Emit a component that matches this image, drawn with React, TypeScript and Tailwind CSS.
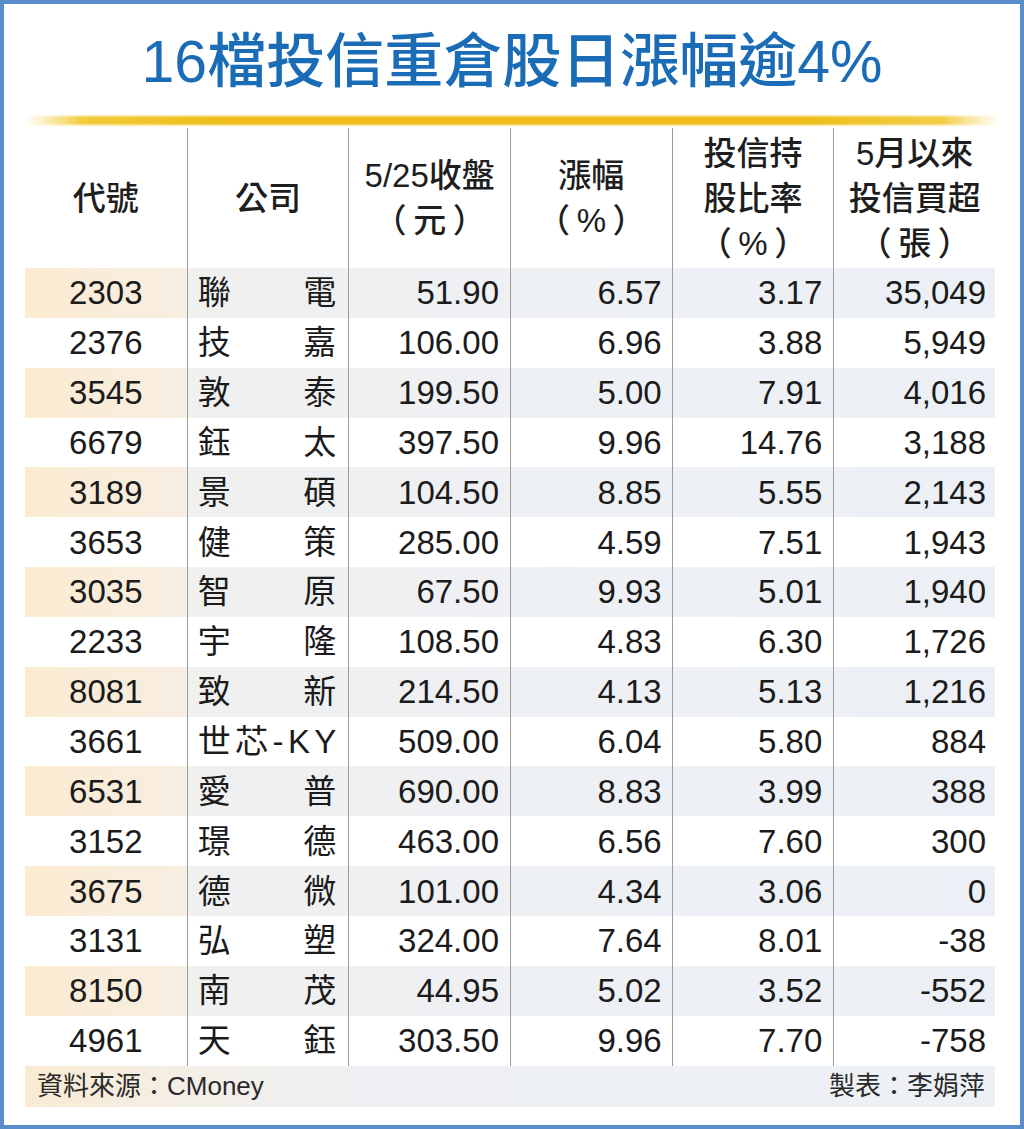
import React from "react";

type Row = [string, string[], string, string, string, string];

const rows: Row[] = [
  ["2303", ["聯", "電"], "51.90", "6.57", "3.17", "35,049"],
  ["2376", ["技", "嘉"], "106.00", "6.96", "3.88", "5,949"],
  ["3545", ["敦", "泰"], "199.50", "5.00", "7.91", "4,016"],
  ["6679", ["鈺", "太"], "397.50", "9.96", "14.76", "3,188"],
  ["3189", ["景", "碩"], "104.50", "8.85", "5.55", "2,143"],
  ["3653", ["健", "策"], "285.00", "4.59", "7.51", "1,943"],
  ["3035", ["智", "原"], "67.50", "9.93", "5.01", "1,940"],
  ["2233", ["宇", "隆"], "108.50", "4.83", "6.30", "1,726"],
  ["8081", ["致", "新"], "214.50", "4.13", "5.13", "1,216"],
  ["3661", ["世", "芯", "-", "K", "Y"], "509.00", "6.04", "5.80", "884"],
  ["6531", ["愛", "普"], "690.00", "8.83", "3.99", "388"],
  ["3152", ["璟", "德"], "463.00", "6.56", "7.60", "300"],
  ["3675", ["德", "微"], "101.00", "4.34", "3.06", "0"],
  ["3131", ["弘", "塑"], "324.00", "7.64", "8.01", "-38"],
  ["8150", ["南", "茂"], "44.95", "5.02", "3.52", "-552"],
  ["4961", ["天", "鈺"], "303.50", "9.96", "7.70", "-758"],
];

const headers: string[][] = [
  ["代號"],
  ["公司"],
  ["5/25收盤", "（\u2009元\u2009）"],
  ["漲幅", "（\u2009%\u2009）"],
  ["投信持", "股比率", "（\u2009%\u2009）"],
  ["5月以來", "投信買超", "（\u2009張\u2009）"],
];

export default function App() {
  return (
    <div className="w-[1024px] h-[1129px] bg-white border-4 border-[#5a8cc7] flex flex-col font-['Liberation_Sans','Noto_Sans_CJK_TC',sans-serif] text-[#1b1b1b]">
      <h1 className="mt-[29px] h-[59px] text-center text-[59px] leading-[59px] font-medium text-[#1a6cb6]">
        16檔投信重倉股日漲幅逾4%
      </h1>
      <div className="mt-[24px] ml-[21px] w-[975px] h-[9px] rounded-full blur-[0.8px] bg-[linear-gradient(90deg,rgba(245,205,60,0)_0%,#f3cb3a_6%,#eebd16_20%,#eebd16_80%,#f3cd45_94%,rgba(245,205,60,0)_100%)]" />
      <div className="mt-[3px] ml-[21px] w-[970px] flex flex-col">
        <div className="grid grid-cols-6 h-[140px]">
          {headers.map((h, i) => (
            <div
              key={i}
              className={`flex flex-col items-center justify-center text-[33px] leading-[45px] font-medium text-[#1e1e1e] ${
                i > 0 ? "border-l-[1.5px] border-[#9c9c9c]" : ""
              }`}
            >
              {h.map((line, j) => (
                <span key={j} className="whitespace-pre">{line}</span>
              ))}
            </div>
          ))}
        </div>
        {rows.map((r, idx) => {
          const striped = idx % 2 === 0;
          return (
            <div
              key={r[0]}
              className={`grid grid-cols-6 h-[49.85px] text-[33px] leading-none ${
                striped
                  ? "bg-[linear-gradient(90deg,#fbebd1_0%,#f7eee2_16.6%,#f0f0ef_16.6%,#eef0f3_45%,#ecf0f6_100%)]"
                  : ""
              }`}
            >
              <div className="flex items-center justify-center">{r[0]}</div>
              <div className="flex items-center justify-between pl-[10px] pr-[12px] border-l-[1.5px] border-[#9c9c9c]">
                {r[1].map((c, k) => (
                  <span key={k}>{c}</span>
                ))}
              </div>
              <div className="flex items-center justify-end pr-[11px] border-l-[1.5px] border-[#9c9c9c]">{r[2]}</div>
              <div className="flex items-center justify-end pr-[10px] border-l-[1.5px] border-[#9c9c9c]">{r[3]}</div>
              <div className="flex items-center justify-end pr-[11px] border-l-[1.5px] border-[#9c9c9c]">{r[4]}</div>
              <div className="flex items-center justify-end pr-[9px] border-l-[1.5px] border-[#9c9c9c]">{r[5]}</div>
            </div>
          );
        })}
        <div className="h-[41px] flex items-center justify-between pl-[12px] pr-[10px] text-[26px] leading-none text-[#2a2a2a] bg-[linear-gradient(90deg,#f9ead2_0%,#f3efe8_18%,#eef0f3_35%,#edf0f5_100%)]">
          <span>資料來源：CMoney</span>
          <span>製表：李娟萍</span>
        </div>
      </div>
    </div>
  );
}
